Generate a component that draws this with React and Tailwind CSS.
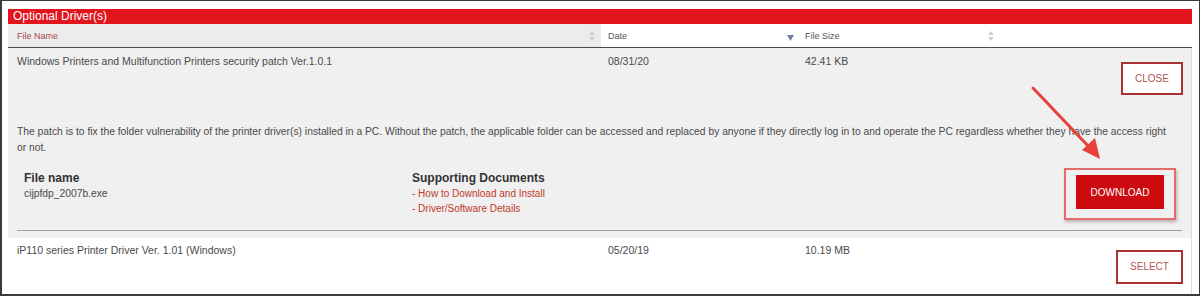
import React from "react";

// ===== Data =====
const openDriver = {
  name: "Windows Printers and Multifunction Printers security patch Ver.1.0.1",
  date: "08/31/20",
  size: "42.41 KB",
  file: "cijpfdp_2007b.exe",
  note:
    "The patch is to fix the folder vulnerability of the printer driver(s) installed in a PC. Without the patch, the applicable folder can be accessed and replaced by anyone if they directly log in to and operate the PC regardless whether they have the access right or not.",
};

const otherDriver = {
  name: "iP110 series Printer Driver Ver. 1.01 (Windows)",
  date: "05/20/19",
  size: "10.19 MB",
};

const font = { fontFamily: '"Liberation Sans", Arial, sans-serif' };

function SortBoth() {
  return (
    <svg width="6" height="10" viewBox="0 0 6 10" className="shrink-0">
      <path d="M3 0 L6 4 L0 4 Z" fill="#d0d0d0" />
      <path d="M3 10 L6 6 L0 6 Z" fill="#d0d0d0" />
    </svg>
  );
}

function SortDown() {
  return (
    <svg width="7" height="6" viewBox="0 0 7 6" className="shrink-0 mt-[4px]">
      <path d="M0 0 L7 0 L3.5 6 Z" fill="#6f7fa8" />
    </svg>
  );
}

export default function App() {
  return (
    <div
      className="relative w-[1200px] h-[296px] overflow-hidden bg-white border-t border-r border-l-2 border-b-2 border-[#3b3b3b] pt-[8px] pl-[6px] pr-[7px]"
      style={font}
    >
      {/* Title bar */}
      <div className="h-[15px] bg-[#e3151c] text-white text-[12px] leading-[15px] pl-[5px]">
        Optional Driver(s)
      </div>

      {/* Header */}
      <div className="flex h-[24px] border-b border-[#4a4a4a] text-[9px] leading-[24px]">
        <div className="w-[593px] bg-[#ececec] flex items-center justify-between pl-[9px] pr-[6px] text-[#a84a4a]">
          <span>File Name</span>
          <SortBoth />
        </div>
        <div className="w-[197px] bg-white flex items-center justify-between pl-[7px] pr-[4px] text-[#555]">
          <span>Date</span>
          <SortDown />
        </div>
        <div className="flex-1 bg-white flex items-center pl-[7px] text-[#555]">
          <span className="w-[183px]">File Size</span>
          <SortBoth />
        </div>
      </div>

      {/* Expanded row */}
      <div className="bg-[#f0f0f0] border-r border-[#dcdcdc] pb-[7px]">
        <div className="flex text-[10.5px] leading-[14px] text-[#4a4a4a]">
          <div className="w-[593px] pl-[9px] pt-[6px]">{openDriver.name}</div>
          <div className="w-[197px] pl-[7px] pt-[6px]">{openDriver.date}</div>
          <div className="flex-1 flex justify-between pl-[7px] pt-[6px] pr-[8px]">
            <span>{openDriver.size}</span>
            <button className="mt-[8px] w-[62px] h-[33px] border-2 border-[#a83232] bg-white text-[10px] text-[#b05555]">
              CLOSE
            </button>
          </div>
        </div>

        <p className="mt-[29px] pl-[9px] pr-[24px] text-[10.3px] leading-[16px] text-[#4a4a4a]">
          {openDriver.note}
        </p>

        <div className="mt-[12px] flex items-start">
          <div className="w-[404px] pl-[16px] pt-[2px]">
            <div className="text-[12px] leading-[16px] font-bold text-[#333]">File name</div>
            <div className="text-[10.3px] leading-[16px] text-[#4a4a4a]">{openDriver.file}</div>
          </div>
          <div className="flex-1 pt-[2px]">
            <div className="text-[12px] leading-[16px] font-bold text-[#333]">Supporting Documents</div>
            <div className="text-[10px] leading-[15px] text-[#c0392b]">- How to Download and Install</div>
            <div className="text-[10px] leading-[15px] text-[#c0392b]">- Driver/Software Details</div>
          </div>
          <div className="mr-[15px] border-2 border-[#e36b6b] px-[10px] pt-[5px] pb-[9px] shadow-[1px_2px_3px_rgba(0,0,0,0.25)]">
            <button className="w-[88px] h-[34px] bg-[#cc0a0f] text-white text-[10px]">DOWNLOAD</button>
          </div>
        </div>

        <div className="mt-[10px] mx-[9px] border-t border-[#a0a0a0]" />
      </div>

      {/* Collapsed row */}
      <div className="flex h-[57px] border-r border-[#dcdcdc] text-[10.5px] leading-[14px] text-[#4a4a4a]">
        <div className="w-[593px] pl-[9px] pt-[5px]">{otherDriver.name}</div>
        <div className="w-[197px] pl-[7px] pt-[5px]">{otherDriver.date}</div>
        <div className="flex-1 flex justify-between pl-[7px] pt-[5px] pr-[8px]">
          <span>{otherDriver.size}</span>
          <button className="mt-[7px] w-[67px] h-[34px] border-2 border-[#a83232] bg-white text-[10px] text-[#b05555]">
            SELECT
          </button>
        </div>
      </div>

      {/* Annotation arrow */}
      <svg className="absolute left-0 top-0 pointer-events-none" width="1200" height="296">
        <line x1="1031" y1="87" x2="1089" y2="148" stroke="#e8403a" strokeWidth="3" strokeLinecap="round" />
        <path d="M1098 158 L1080 149 L1093 137 Z" fill="#e8403a" />
      </svg>
    </div>
  );
}
